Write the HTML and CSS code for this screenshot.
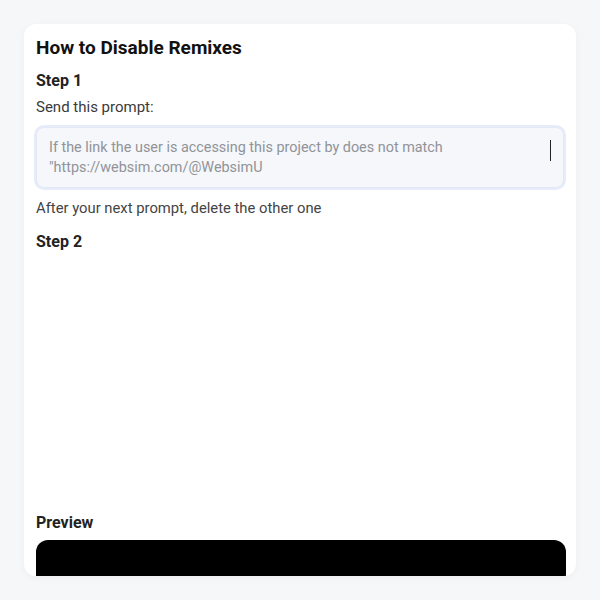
FILE: index.html
```html
<!DOCTYPE html>
<html>
<head>
<meta charset="utf-8">
<link rel="stylesheet" href="styles.css">
</head>
<body>
<div class="card">
  <h1 class="title">How to Disable Remixes</h1>
  <h2 class="step">Step 1</h2>
  <p class="text">Send this prompt:</p>
  <div class="prompt">
    <p class="prompt-text">If the link the user is accessing this project by does not match "https://websim.com/@WebsimU</p>
    <span class="caret"></span>
  </div>
  <p class="text after">After your next prompt, delete the other one</p>
  <h2 class="step step2">Step 2</h2>
  <div class="spacer"></div>
  <h2 class="step">Preview</h2>
  <div class="preview"></div>
</div>
</body>
</html>
```

FILE: styles.css
```css
html, body {
  margin: 0;
  padding: 0;
  background: #f6f7f9;
  font-family: Roboto, "Liberation Sans", sans-serif;
}
body {
  padding: 24px;
}
.card {
  height: 552px;
  box-sizing: border-box;
  background: #ffffff;
  border-radius: 12px;
  padding: 13px 10px 0 12px;
  overflow: hidden;
  box-shadow: 0 2px 8px rgba(0, 0, 0, 0.04);
  display: flex;
  flex-direction: column;
}
.title {
  margin: 0;
  font-size: 19px;
  font-weight: 700;
  line-height: 22px;
  color: #111111;
}
.step {
  margin: 11px 0 0 0;
  font-size: 16px;
  font-weight: 700;
  line-height: 22px;
  color: #222222;
}
.text {
  margin: 4px 0 0 0;
  font-size: 15px;
  line-height: 22px;
  color: #3a3a3a;
}
.prompt {
  position: relative;
  margin: 9px 2px 0 0;
  background: #f5f7fb;
  border: 1px solid #e3e8f4;
  border-radius: 8px;
  box-shadow: 0 0 0 2px #e6ecfa;
  padding: 10px 12px 9px 12px;
}
.prompt-text {
  margin: 0;
  font-size: 14.4px;
  line-height: 20px;
  color: #919398;
  padding-right: 40px;
}
.caret {
  position: absolute;
  right: 12px;
  top: 12px;
  width: 1.5px;
  height: 21px;
  background: #222;
}
.after {
  margin-top: 9px;
  font-size: 14.8px;
  color: #444;
}
.step2 {
  margin-top: 12px;
}
.spacer {
  height: 248px;
  flex: none;
}
.preview {
  margin-top: 6px;
  height: 60px;
  flex: none;
  background: #000;
  border-radius: 12px 12px 0 0;
}
```
